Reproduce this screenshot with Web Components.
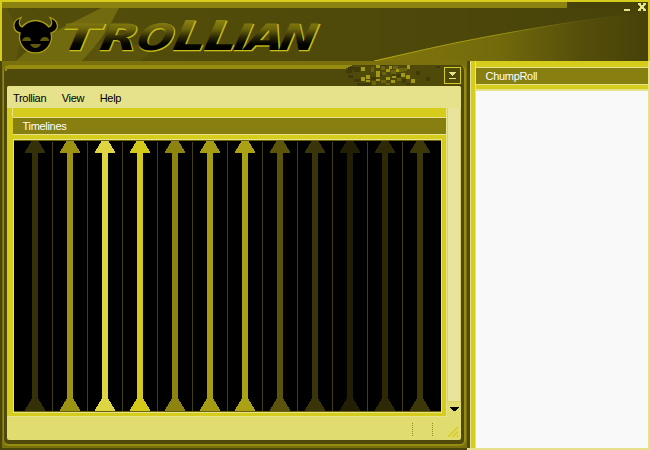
<!DOCTYPE html>
<html lang="en"><head><meta charset="utf-8"><title>Trollian</title>
<style>html,body{margin:0;width:650px;height:450px;overflow:hidden;background:#504a0a}body{font:11px "Liberation Sans",Arial,sans-serif;letter-spacing:-.3px}</style>
</head><body><trollian-app></trollian-app>
<script>
const define=(name,html,setup)=>customElements.define(name,class extends HTMLElement{
  connectedCallback(){ if(this.shadowRoot)return;
    const t=document.createElement('template');t.innerHTML=html;
    this.attachShadow({mode:'open'}).append(t.content.cloneNode(true));
    if(setup)setup(this,this.shadowRoot);}
});

define('app-logo',`<style>:host{display:block;width:650px;height:53px}svg{display:block}text{letter-spacing:0;font-family:"DejaVu Sans","Liberation Sans",sans-serif;font-weight:bold}</style>
<svg width="650" height="53" viewBox="0 8 650 53">
<defs>
<linearGradient id="g" gradientUnits="userSpaceOnUse" x1="0" y1="-30" x2="0" y2="0"><stop offset="0" stop-color="#8b820e"/><stop offset=".3" stop-color="#6a620b"/><stop offset=".55" stop-color="#2e2a06"/><stop offset=".78" stop-color="#050500"/><stop offset="1" stop-color="#000"/></linearGradient>
<linearGradient id="s" x1="0" x2="1"><stop offset="0" stop-color="#80760d"/><stop offset=".45" stop-color="#736a0c"/><stop offset=".75" stop-color="#554e0a"/><stop offset="1" stop-color="#464109"/></linearGradient>
<linearGradient id="b" x1="0" x2="1"><stop offset="0" stop-color="#544e0b"/><stop offset=".5" stop-color="#504a0a"/><stop offset="1" stop-color="#474209"/></linearGradient>
<linearGradient id="e" x1="0" x2="1"><stop offset="0" stop-color="#b5aa16"/><stop offset=".45" stop-color="#9c9212"/><stop offset="1" stop-color="#48430a" stop-opacity="0"/></linearGradient>
</defs>
<rect y="8" width="650" height="53" fill="url(#b)"/>
<path d="M2 8H7L21 37L16 61H2Z" fill="#5d560b"/><path d="M16 61Q40 38 58 30L101 8H119Q104 39 82 61Z" fill="#726a0e"/><path d="M82 61Q91 53 97 43L160 46L140 61Z" fill="#5a530b"/>
<path d="M374 61L427 49Q480 37 560 24Q610 16 650 13V61Z" fill="url(#s)"/>
<path d="M374 61L427 49Q480 37 560 24Q610 16 650 13" fill="none" stroke="url(#e)"/>
<path d="M21 17.500Q13 20 14 27Q15 32 20 33A16 16 0 1 0 51 33Q57 31 57.500 26Q57 20 50 17.500Q54 24 49 27Q43 20.500 35.500 20.500Q28 20.500 22 27Q17 24 21 17.500Z" fill="#000" stroke="#a99e13" stroke-width="1.3"/>
<path d="M22 41Q23 37 27 37Q31 37 31 41ZM40 41Q41 37 45 37Q49 37 49 41ZM30 44H41Q39 48 35.500 48Q32 48 30 44Z" fill="#60590b"/>
<g id="word" transform="translate(0 50.500) skewX(-23)"></g>
</svg>`,(h,r)=>{
 const letters=[['T',55,39,0],['R',95,38,0],['O',132,37,0],['L',168,33,1],['L',199,33,1],['I',229,17,0],['A',242,37,0],['N',275,37,0]];
 const row=(dx,dy,paint)=>letters.map(([c,x,w,tall])=>`<text x="${x+dx}" y="${dy}" font-size="${tall?41:36.500}" textLength="${w}" lengthAdjust="spacingAndGlyphs" ${paint}>${c}</text>`).join('');
 r.getElementById('word').innerHTML=row(.8,0,'fill="#c9be19" stroke="#c9be19" stroke-width=".7"')+row(-.4,-.7,'fill="url(#g)"');
});

define('title-header',`<style>:host{display:grid;grid-template-rows:2px 6px 53px;height:61px;background:#504a0a;position:relative;box-sizing:border-box}
.a{background:#d6cc1c}.b{background:linear-gradient(to right,#8b8210 567px,#474209 567px)}
.l,.r{position:absolute;top:0;bottom:0;width:2px;background:#d6cc1c}.l{left:0}.r{right:0}.w{position:absolute;right:2px;top:2px}</style>
<div class="a"></div><div class="b"></div><app-logo></app-logo><i class="l"></i><i class="r"></i>
<svg class="w" width="26" height="12" shape-rendering="crispEdges" fill="#e6e28c"><path d="M2 7h6v2H2zM16 1h3v2h-3zM21 1h3v2h-3zM17 3h6v1h-6zM18 4h4v2h-4zM17 6h6v1h-6zM16 7h3v2h-3zM21 7h3v2h-3z"/></svg>`);

define('section-title',`<style>:host{display:block;box-sizing:border-box;height:18px;background:#878010;border:solid #e6e28c;border-width:1px 0;color:#fff;font-size:11px;line-height:16px;padding-left:9.500px}</style><slot></slot>`);

define('menu-bar',`<style>:host{display:flex;gap:15.500px;height:22px;background:#e6e28c;color:#000;font-size:11px;line-height:24px;padding-left:6px;border-radius:2px 2px 0 0}</style><slot></slot>`);

define('time-lines',`<style>:host{display:block;height:270px;background:#000;overflow:hidden}svg{display:block}</style><svg width="427" height="270" shape-rendering="crispEdges"></svg>`,(h,r)=>{
 const cs=['#343008','#9c9313','#ddd640','#d3c91a','#8d8410','#a69c14','#aba114','#5b540a','#393508','#231f05','#2d2907','#3c3808'];
 let s='';
 cs.forEach((c,i)=>{const x=21+i*35;
  s+=`<path fill="${c}" d="M${x-3.500} 0H${x+3.500}L${x+10} 11V12H${x+3}V257L${x+10} 269V270H${x-10}V269L${x-3} 257V12H${x-10}V11Z"/>`;
  if(i<11)s+=`<path fill="#453f0d" d="M${x+17} 1h1v269h-1z"/>`;});
 r.querySelector('svg').innerHTML=s;
});

define('pixel-trim',`<style>:host{display:block;height:21px}svg{display:block}</style><svg width="464" height="21" viewBox="0 65 464 21" shape-rendering="crispEdges"></svg>`,(h,r)=>{
 let s='<path fill="#968c10" d="M5 65H352V66H350V67H348V68H346V69H7V71H5Z"/>';
 const put=(c,list)=>list.forEach(([x,y,w,h])=>s+=`<path fill="${c}" d="M${x} ${y}h${w}v${h}h-${w}z"/>`);
 put('#3f3a08',[[348,67,12,3],[346,70,6,3],[354,69,6,3],[348,75,5,3],[354,79,7,3],[357,83,14,3],[371,77,5,3],[380,73,3,3],[397,74,4,3],[416,71,4,4],[426,77,4,4],[406,83,4,2],[436,66,4,2],[392,73,3,3],[402,79,4,4],[380,65,6,2]]);
 put('#a39a14',[[361,67,4,4],[376,65,4,3],[376,71,4,6],[366,75,4,4],[361,77,4,4],[366,80,4,2],[376,79,4,2],[386,69,4,3],[389,66,3,3],[386,77,4,3],[392,76,4,2],[391,80,4,3],[396,69,4,3],[401,73,4,4],[407,65,3,4],[406,75,4,4],[411,79,4,4]]);
 put('#6b640d',[[371,67,3,5],[381,66,4,4],[382,72,4,3],[381,80,5,3],[391,70,5,4],[399,68,4,4],[397,78,4,3],[393,66,5,3],[403,68,4,3],[372,81,4,4],[386,83,4,2]]);
 r.querySelector('svg').innerHTML=s;
});

define('main-panel',`<style>
:host{display:block;box-sizing:border-box;width:467px;height:389px;background:#7a710e;border-left:2px solid #4b450a;border-bottom:2px solid #4b450a;padding-top:4px}
.in{box-sizing:border-box;height:381px;width:463px;background:#504a0a;border:solid #968c10;border-width:0 2px 2px 1px;margin-left:1px;border-radius:6px;overflow:hidden;position:relative}
pixel-trim{margin-left:-4px}
.panel{width:454px;height:354px;margin-left:3px;background:#e0dc70;border-radius:2px;overflow:hidden}
.mid{display:grid;grid-template-columns:439px 1px 14px;height:309px}
.left{background:#d6cc1c;padding-left:6px;border-left:1px solid #e6e28c;margin-left:-1px;border-bottom:1px solid #e6e28c;box-sizing:border-box}
.cap{height:9px;border-left:1px solid #e6e28c;margin-left:-1px}
.tl{height:274px;box-sizing:border-box;margin-top:4px;width:429px;border:1px solid #e6e28c;padding:1px 0;background:#6a620d}
.edge{background:#e6e28c}.scroll{background:#e0dc70}
.thumb{height:294px;box-sizing:border-box;background:#e9e49c;border:1px solid #d8d366;border-top:0}
.scroll svg{display:block;margin:5px auto 0}
.status{height:23px;display:flex;justify-content:flex-end;box-sizing:border-box}
.btn{position:absolute;right:3px;top:2px;width:15px;height:15px;border:1px solid #d6cc1c}
</style><div class="in"><pixel-trim></pixel-trim>
<svg class="btn" viewBox="0 0 15 15" shape-rendering="crispEdges" fill="#e6e28c"><path d="M4 4h7v1h-1v1H9v1H8v1H7V7H6V6H5V5H4zM4 10h7v1H4z"/></svg>
<div class="panel"><menu-bar><span>Trollian</span><span>View</span><span>Help</span></menu-bar>
<div class="mid"><div class="left"><div class="cap"></div><section-title>Timelines</section-title><div class="tl"><time-lines></time-lines></div></div><div class="edge"></div>
<div class="scroll"><div class="thumb"></div><svg width="9" height="5" shape-rendering="crispEdges"><path d="M0 0h9v1H8v1H7v1H6v1H3V3H2V2H1V1H0z"/></svg></div></div>
<div class="status"><svg width="52" height="23"><path d="M3.500 6V20M23.500 6V20" stroke="#968c10" stroke-dasharray="1 1" shape-rendering="crispEdges"/><path d="M39 20L49 10M43.500 20L49 14.500M48 20L49.500 18.500" stroke="#d6cc1c" stroke-width="1.500"/></svg></div></div></div>`);

define('chump-roll',`<style>:host{display:grid;grid-template-columns:3px 1px 4px 1px 172px 2px;width:183px;height:389px}
.d{background:#504a0a;border-bottom:2px solid #e6e28c}.l{background:#e6e28c}.y{background:#d6cc1c;border-bottom:2px solid #e6e28c}.c{background:#f9f9f9;border-bottom:2px solid #e6e28c;box-sizing:border-box}
.c:before{content:"";display:block;height:6px;background:#d6cc1c}.g{height:6px;background:linear-gradient(#d6cc1c 4px,#e6e28c 4px)}</style>
<div class="d"></div><div class="l"></div><div class="y"></div><div class="l"></div><div class="c"><section-title>ChumpRoll</section-title><div class="g"></div></div><div class="l"></div>`);

define('trollian-app',`<style>:host{display:block;width:650px;height:450px}.row{display:flex}</style><title-header></title-header><div class="row"><main-panel></main-panel><chump-roll></chump-roll></div>`);
</script></body></html>
